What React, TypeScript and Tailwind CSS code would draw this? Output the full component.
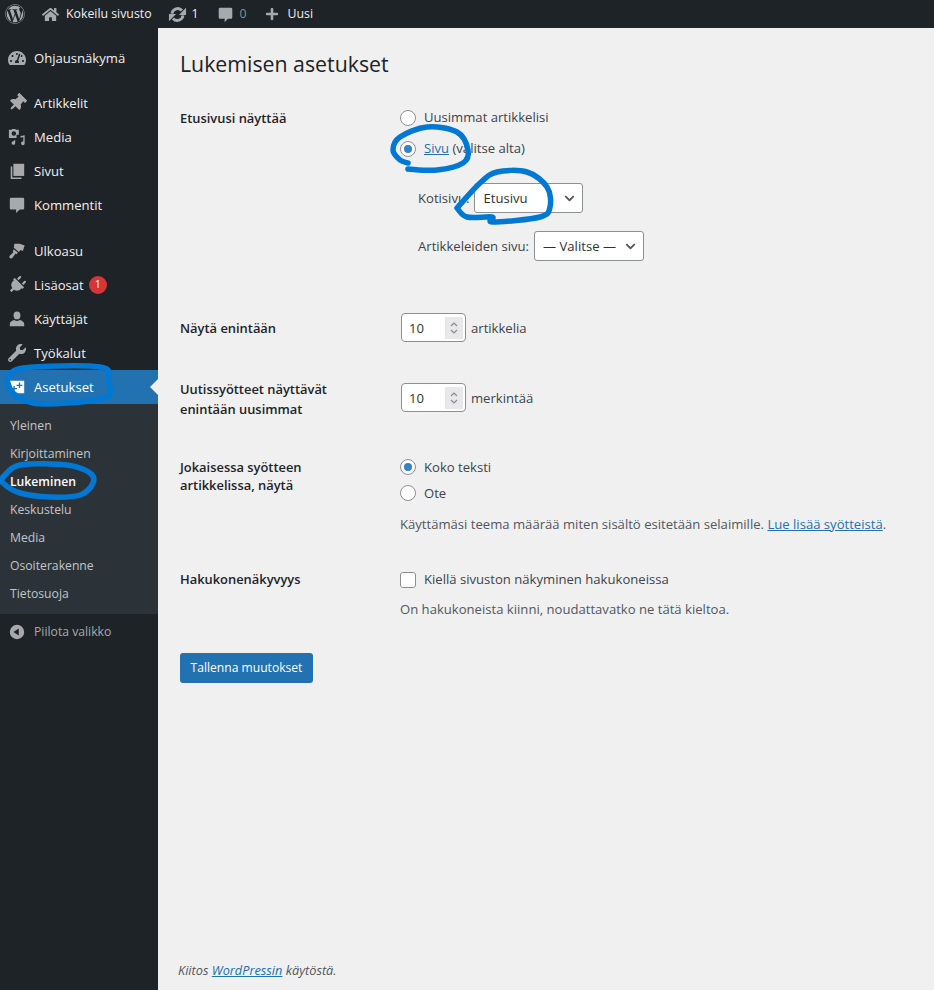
import React from "react";
import { FaWordpress, FaHome, FaThumbtack, FaPlug, FaWrench, FaTachometerAlt, FaPlus, FaChevronDown } from "react-icons/fa";

const Comment = ({ c = "" }: { c?: string }) => (
  <svg viewBox="0 0 20 20" className={c} fill="currentColor"><path d="M3.500 2h13A1.500 1.500 0 0 1 18 3.500v10a1.500 1.500 0 0 1-1.500 1.500H13l-4 4v-4H3.500A1.500 1.500 0 0 1 2 13.500v-10A1.500 1.500 0 0 1 3.500 2z" /></svg>
);
const Sync = ({ c = "" }: { c?: string }) => (
  <svg viewBox="0 0 20 20" className={c} fill="currentColor">
    <path d="M4.200 9a6 6 0 0 1 10.500-3.200M15.800 11a6 6 0 0 1-10.500 3.200" fill="none" stroke="currentColor" strokeWidth="3" />
    <path d="M19 3v7.500h-7.500zM1 17V9.500h7.500z" />
  </svg>
);
const MediaI = ({ c = "" }: { c?: string }) => (
  <svg viewBox="0 0 20 20" className={c} fill="currentColor"><path fillRule="evenodd" d="M1 2h3l1-1h3l1 1h3v5.500H9.500V11H1V2zm5.500 1.500a2.500 2.500 0 1 0 0 5 2.500 2.500 0 0 0 0-5z" /><path d="M18.500 8v9a2 2 0 1 1-1.500-1.900V10l-3 .8v-2zM8 13.500v3.200a2 2 0 1 1-1.500-1.900v-1.300z" /></svg>
);
const Pages = ({ c = "" }: { c?: string }) => (
  <svg viewBox="0 0 20 20" className={c} fill="currentColor"><path d="M6 2h12v13.500H6z" /><path d="M3 5h1.800v12.200H15V19H3z" /></svg>
);
const Settings = ({ c = "" }: { c?: string }) => (
  <svg viewBox="0 0 20 20" className={c} fill="currentColor"><path d="M2 3h16v14H2zm10 2v2.500H9.500V9H12v2h1.500V9H16V7.500h-2.500V5zM6 9v2H4v1.500h2V15h1.500v-2.500H10V11H7.500V9z" fillRule="evenodd" /></svg>
);
const Collapse = ({ c = "" }: { c?: string }) => (
  <svg viewBox="0 0 20 20" className={c} fill="currentColor"><path fillRule="evenodd" d="M10 2a8 8 0 1 1 0 16 8 8 0 0 1 0-16zm2 4-6 4 6 4z" /></svg>
);
const Brush = ({ c = "" }: { c?: string }) => (
  <svg viewBox="0 0 20 20" className={c} fill="currentColor"><path d="M7 2h6l5.500 2-2 6-2.500-1-2 2-5.500-4.500z" /><path d="M6.500 8l4.500 4-1.500 1.500-1-.8-3.500 4.800c-.8 1-2.200 1.200-3 .4-.8-.8-.6-2 .2-2.800L6 11.500l-.8-1z" /></svg>
);
const UserI = ({ c = "" }: { c?: string }) => (
  <svg viewBox="0 0 20 20" className={c} fill="currentColor"><ellipse cx="10" cy="6" rx="3.800" ry="4.300" /><path d="M2 18v-2.500c0-2.300 2.500-3.500 5-4.300 1.800 1.300 4.200 1.300 6 0 2.500.8 5 2 5 4.300V18z" /></svg>
);

const icon = "w-[18px] h-[18px]";
const Item = ({ I, label, mt = "", badge }: { I: React.ReactNode; label: string; mt?: string; badge?: boolean }) => (
  <div className={`h-[34px] flex items-center text-[#f0f0f1] text-[13.1px] ${mt}`}>
    <span className="w-[34px] pl-[8px] flex items-center text-[#a7aaad]">{I}</span>
    <span className="pt-[2px]">{label}</span>
    {badge && <span className="ml-[5px] w-[18px] h-[18px] rounded-full bg-[#d63638] text-white text-[10.5px] flex items-center justify-center">1</span>}
  </div>
);

const Sub = ({ label, active }: { label: string; active?: boolean }) => (
  <div className={`h-[28.1px] flex items-center pl-[10px] text-[12.2px] ${active ? "text-white font-semibold" : "text-[#c3c4c7]"}`}>{label}</div>
);

const Radio = ({ on }: { on?: boolean }) => (
  <span className="w-4 h-4 rounded-full border border-[#8c8f94] bg-white flex items-center justify-center shrink-0">
    {on && <span className="w-2 h-2 rounded-full bg-[#3582c4]" />}
  </span>
);

const Select = ({ w, label }: { w: string; label: string }) => (
  <span className={`${w} h-[30px] rounded-[3px] border border-[#8c8f94] bg-white flex items-center justify-between pl-[8px] pr-[7px] text-[#2c3338]`}>
    <span className="pt-[2px]">{label}</span>
    <FaChevronDown className="w-[11px] h-[11px] text-[#50575e]" />
  </span>
);

const NumberBox = () => (
  <span className="w-[65px] h-[29px] rounded-[4px] border border-[#8c8f94] bg-white flex items-center pl-[7px] pr-[2px] text-[#2c3338]">
    <span className="flex-1 pt-[2px]">10</span>
    <span className="w-[18px] h-[22px] bg-[#e8e8ea] flex flex-col items-center justify-center">
      <svg viewBox="0 0 10 14" className="w-[10px] h-[14px]" fill="none" stroke="#8a8a8e" strokeWidth="1.2"><path d="M2 5l3-3 3 3M2 9l3 3 3-3" /></svg>
    </span>
  </span>
);

const Label = ({ children, c = "leading-[20px]" }: { children: React.ReactNode; c?: string }) => (
  <div className="w-[220px] shrink-0">
    <div className={`w-[170px] font-semibold text-[#1d2327] text-[12.9px] ${c}`}>{children}</div>
  </div>
);

const curve = (p: number[][]) => {
  let d = `M${p[0][0]} ${p[0][1]}`;
  for (let i = 0; i < p.length - 1; i++) {
    const a = p[Math.max(i - 1, 0)], b = p[i], e = p[i + 1], f = p[Math.min(i + 2, p.length - 1)];
    d += `C${b[0] + (e[0] - a[0]) / 6} ${b[1] + (e[1] - a[1]) / 6} ${e[0] - (f[0] - b[0]) / 6} ${e[1] - (f[1] - b[1]) / 6} ${e[0]} ${e[1]}`;
  }
  return d;
};

const marks = [
  [[408, 169], [437, 170], [463, 163], [468, 150], [457, 132], [427, 127], [400, 137], [393, 150], [400, 160], [408, 163]],
  [[457, 208], [480, 183], [497, 172], [527, 172], [547, 187], [550, 207], [540, 217], [493, 222], [492, 217], [467, 217], [457, 208]],
  [[7, 380], [23, 368], [100, 367], [108, 380], [107, 397], [67, 403], [33, 403], [13, 393], [7, 380]],
  [[3, 477], [20, 465], [67, 465], [90, 473], [93, 483], [80, 495], [50, 497], [20, 493], [3, 483], [3, 477]],
];

export default function App() {
  return (
    <div className="relative h-[990px] w-[934px] overflow-hidden bg-[#f0f0f1] flex flex-col font-['Open_Sans','Noto_Sans',sans-serif] text-[13.1px] text-[#3c434a]">
      <header className="h-[28px] shrink-0 bg-[#1d2327] flex items-center text-[#f0f0f1] text-[12.3px]">
        <FaWordpress className="w-[20px] h-[20px] ml-[5px] text-[#a7aaad]" />
        <FaHome className="w-[17px] h-[17px] ml-[17px] text-[#a7aaad]" />
        <span className="ml-[7px]">Kokeilu sivusto</span>
        <Sync c="w-[19px] h-[19px] ml-[16px] text-[#a7aaad]" />
        <span className="ml-[5px]">1</span>
        <Comment c="w-[17px] h-[17px] ml-[18px] text-[#a7aaad]" />
        <span className="ml-[6px] text-[#8c8f94]">0</span>
        <FaPlus className="w-[14px] h-[14px] ml-[18px] text-[#a7aaad]" />
        <span className="ml-[9px]">Uusi</span>
      </header>

      <div className="flex-1 flex min-h-0">
        <nav className="w-[158px] shrink-0 bg-[#1d2327] pt-[13px]">
          <Item I={<FaTachometerAlt className={icon} />} label="Ohjausnäkymä" />
          <Item mt="mt-[11px]" I={<FaThumbtack className={`${icon} rotate-45`} />} label="Artikkelit" />
          <Item I={<MediaI c={icon} />} label="Media" />
          <Item I={<Pages c={icon} />} label="Sivut" />
          <Item I={<Comment c={icon} />} label="Kommentit" />
          <Item mt="mt-[12px]" I={<Brush c={icon} />} label="Ulkoasu" />
          <Item I={<FaPlug className={`${icon} rotate-45`} />} label="Lisäosat" badge />
          <Item I={<UserI c={icon} />} label="Käyttäjät" />
          <Item I={<FaWrench className={icon} />} label="Työkalut" />
          <div className="relative h-[34px] bg-[#2271b1] flex items-center text-white text-[13.1px]">
            <span className="w-[34px] pl-[8px] flex items-center text-white"><Settings c={icon} /></span>
            <span className="pt-[2px]">Asetukset</span>
            <span className="absolute right-0 top-[9px] border-y-[8px] border-y-transparent border-r-[8px] border-r-[#f0f0f1]" />
          </div>
          <div className="bg-[#2c3338] pt-[8px] pb-[5px]">
            <Sub label="Yleinen" />
            <Sub label="Kirjoittaminen" />
            <Sub label="Lukeminen" active />
            <Sub label="Keskustelu" />
            <Sub label="Media" />
            <Sub label="Osoiterakenne" />
            <Sub label="Tietosuoja" />
          </div>
          <div className="h-[34px] mt-[1px] flex items-center text-[#a7aaad] text-[12.2px]">
            <span className="w-[34px] pl-[8px] flex items-center"><Collapse c={icon} /></span>
            <span>Piilota valikko</span>
          </div>
        </nav>

        <main className="flex-1 pl-[22px] pr-[20px] flex flex-col">
          <h1 className="mt-[20px] text-[21.300px] leading-[32px] text-[#1d2327]">Lukemisen asetukset</h1>

          <div className="flex mt-[28px]">
            <Label>Etusivusi näyttää</Label>
            <div className="flex flex-col">
              <label className="flex items-center gap-[8px] h-[20px]"><Radio />Uusimmat artikkelisi</label>
              <label className="flex items-center gap-[8px] h-[20px] mt-[11px]"><Radio on /><span><span className="text-[#2271b1] underline">Sivu</span> (valitse alta)</span></label>
              <div className="flex items-center h-[30px] mt-[24px] ml-[18px] gap-[5px]"><span className="pt-[2px]">Kotisivu:</span> <Select w="w-[109px]" label="Etusivu" /></div>
              <div className="flex items-center h-[30px] mt-[18px] ml-[18px] gap-[5px]"><span className="pt-[2px]">Artikkeleiden sivu:</span> <Select w="w-[110px]" label="— Valitse —" /></div>
            </div>
          </div>

          <div className="flex items-center mt-[52px]">
            <Label>Näytä enintään</Label>
            <div className="flex items-center gap-[5px]"><span className="ml-[1px]"><NumberBox /></span><span className="pt-[2px]">artikkelia</span></div>
          </div>

          <div className="flex items-start mt-[37px]">
            <Label>Uutissyötteet näyttävät enintään uusimmat</Label>
            <div className="flex items-center gap-[5px] mt-[4px]"><span className="ml-[1px]"><NumberBox /></span><span className="pt-[2px]">merkintää</span></div>
          </div>

          <div className="flex mt-[38px]">
            <Label c="pt-[1px] leading-[18px]">Jokaisessa syötteen artikkelissa, näytä</Label>
            <div className="flex flex-col">
              <label className="flex items-center gap-[8px] h-[20px]"><Radio on /><span className="pt-[2px]">Koko teksti</span></label>
              <label className="flex items-center gap-[8px] h-[20px] mt-[6px]"><Radio /><span className="pt-[2px]">Ote</span></label>
              <p className="mt-[12px] whitespace-nowrap text-[#50575e]">Käyttämäsi teema määrää miten sisältö esitetään selaimille. <span className="text-[#2271b1] underline">Lue lisää syötteistä</span>.</p>
            </div>
          </div>

          <div className="flex mt-[35px]">
            <Label c="leading-[18px]">Hakukonenäkyvyys</Label>
            <div className="flex flex-col">
              <label className="flex items-center gap-[8px] h-[20px]"><span className="w-4 h-4 rounded-[3px] border border-[#8c8f94] bg-white" />Kiellä sivuston näkyminen hakukoneissa</label>
              <p className="mt-[10px] text-[#50575e]">On hakukoneista kiinni, noudattavatko ne tätä kieltoa.</p>
            </div>
          </div>

          <button className="mt-[34px] w-[133px] h-[30px] rounded-[3px] bg-[#2271b1] text-white text-[12.1px]">Tallenna muutokset</button>

          <p className="mt-auto mb-[10px] -ml-[2px] italic text-[12.750px] text-[#50575e]">Kiitos <span className="text-[#2271b1] underline">WordPressin</span> käytöstä.</p>
        </main>
      </div>

      <svg className="absolute left-0 top-0 w-[934px] h-[990px] pointer-events-none" viewBox="0 0 934 990" fill="none" stroke="#0078d4" strokeWidth="5.500" strokeLinecap="round" strokeLinejoin="round">
        {marks.map((m, i) => <path key={i} d={curve(m)} />)}
      </svg>
    </div>
  );
}
